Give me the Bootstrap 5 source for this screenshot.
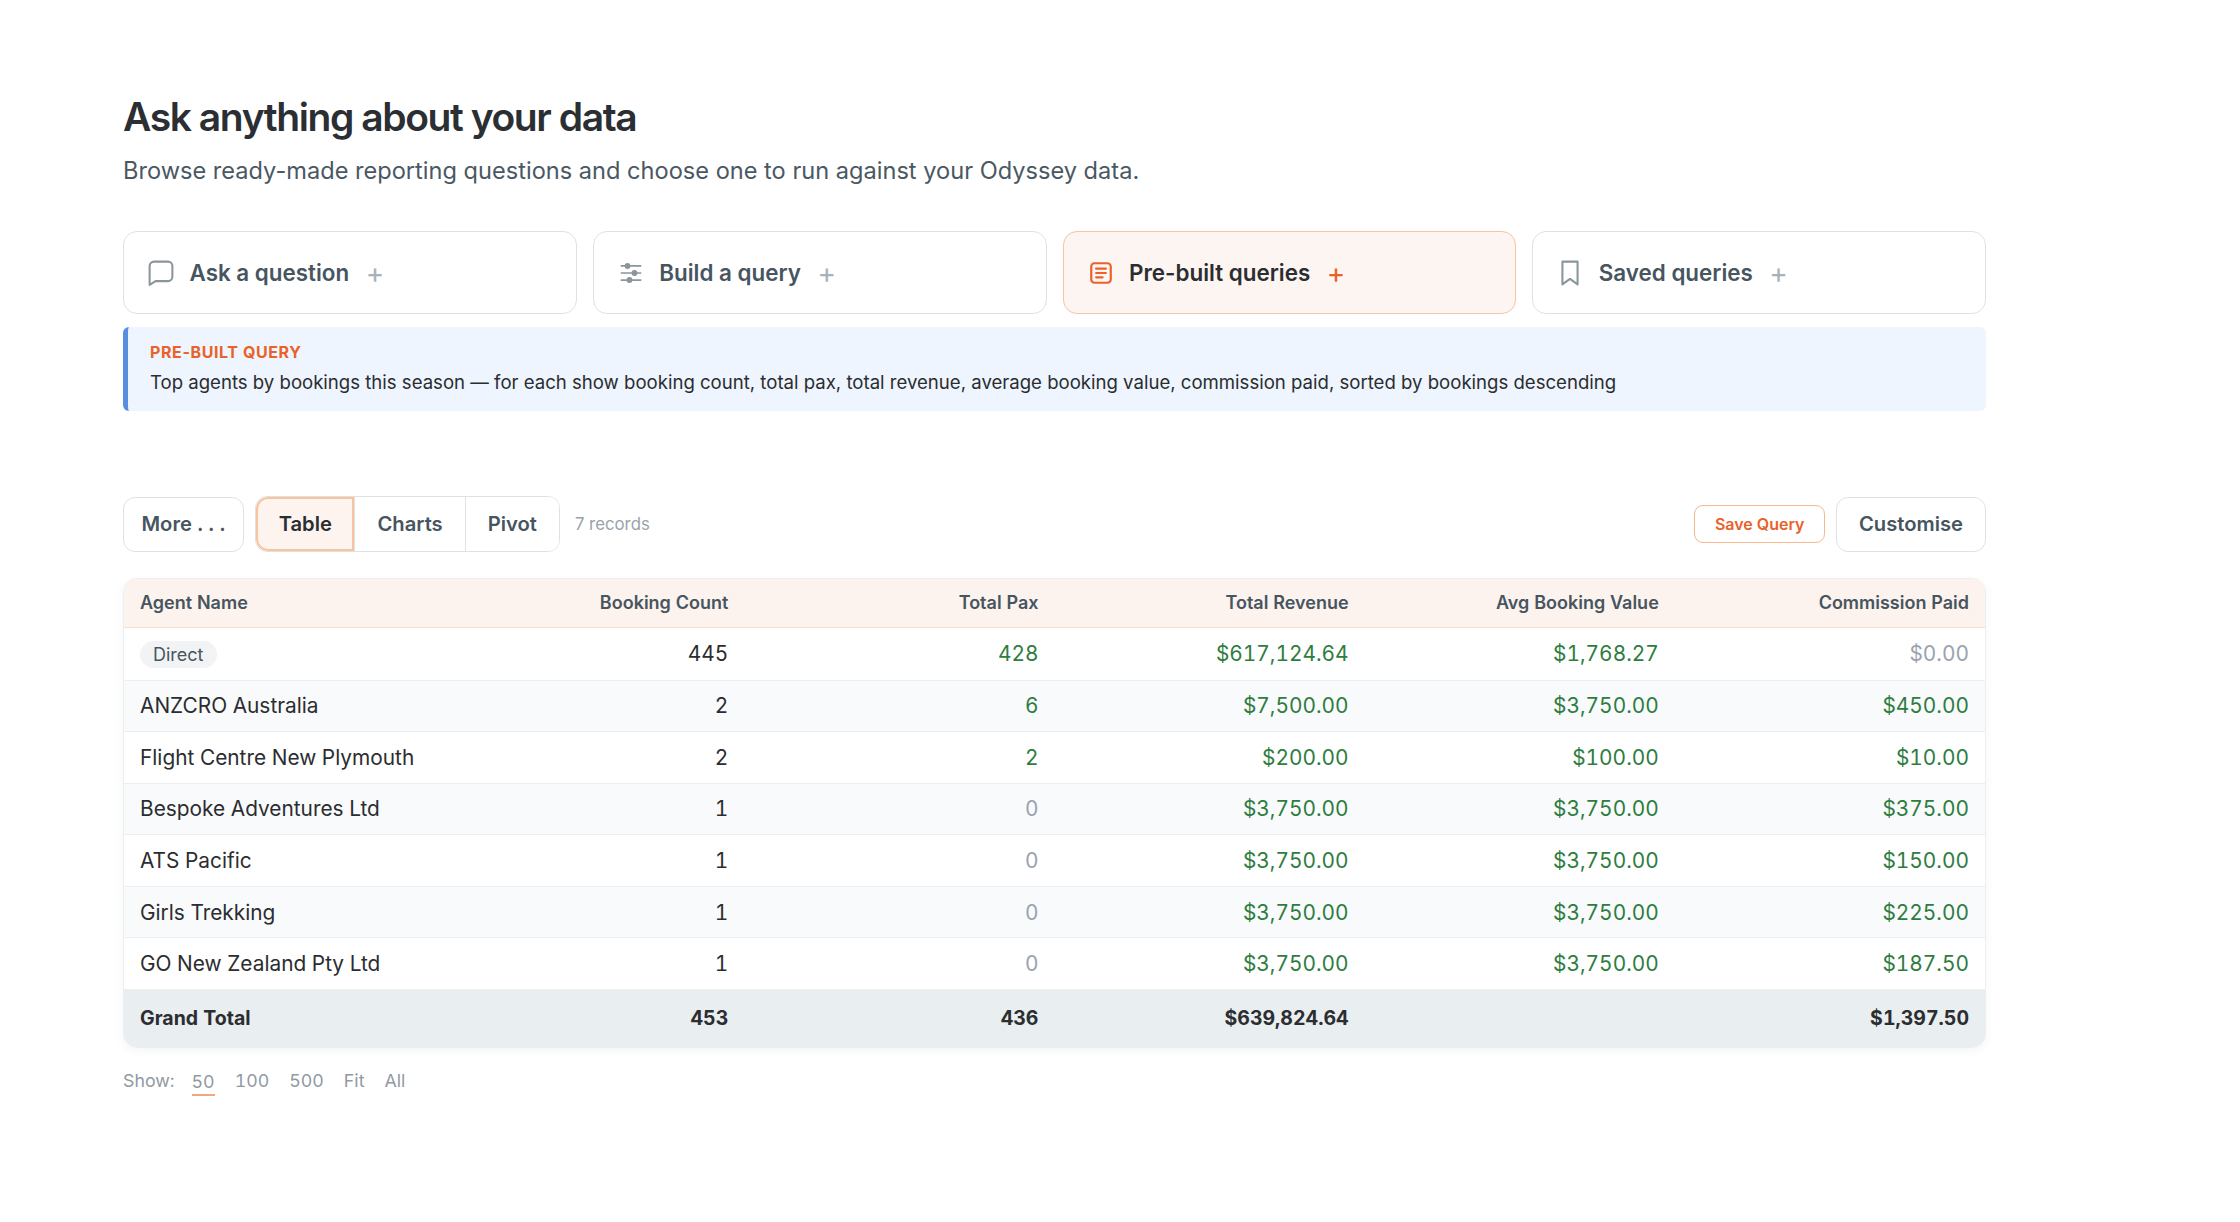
<!DOCTYPE html>
<html lang="en">
<head>
    <meta charset="UTF-8">
    <meta name="viewport" content="width=device-width, initial-scale=1.0">
    <title>Ask anything about your data</title>
    <link href="https://cdn.jsdelivr.net/npm/bootstrap@5.3.0/dist/css/bootstrap.min.css" rel="stylesheet">
    <style>
        body { font-family: "Inter", "Liberation Sans", sans-serif; background: #fff; color: #2b2d30; }
        .page-wrap { width: 1863px; margin-left: 123px; padding-top: 90px; }
        .page-title { font-size: 39px; line-height: 54px; font-weight: 600; letter-spacing: -1.42px; color: #2b2f33; margin: 0; }
        .page-sub { font-size: 23.6px; line-height: 34px; color: #4a5863; margin: 10px 0 0; }

        .mode-row { margin-top: 43px; gap: 16px; }
        .mode-tab { flex: 1 1 0; height: 83px; border: 1.5px solid #dfe2e4; border-radius: 14px; background: #fff; padding: 0 24px; gap: 15.5px; font-size: 22.4px; font-weight: 600; color: #47555f; }
        .mode-tab svg { width: 26px; height: 26px; flex: none; }
        .mode-tab .plus-sign { color: #a9b2b8; font-weight: 400; margin-left: 1px; font-size: 28px; line-height: 1; }
        .mode-tab.is-active { background: #fdf5f2; border-color: #f8c4a0; color: #2b2d30; }
        .mode-tab.is-active .plus-sign { color: #e8622a; }

        .query-note { margin-top: 13px; height: 84px; background: #eef5fe; border-left: 5px solid #5a8fe0; border-radius: 6px; padding: 14px 22px; }
        .query-label { font-size: 16px; line-height: 22px; font-weight: 700; color: #e8622a; letter-spacing: .6px; }
        .query-text { font-size: 18.59px; line-height: 28px; margin-top: 5px; color: #2b2d30; }

        .tool-row { margin-top: 85px; height: 56px; }
        .tool-btn { height: 55px; background: #fff; border: 1.5px solid #dfe2e4; border-radius: 12px; padding: 0 17.5px; font-size: 20.2px; font-weight: 600; color: #47555f; }
        .tool-btn-wide { padding: 0 22px; }
        .seg-group { height: 56px; border: 1.5px solid #dfe2e4; border-radius: 12px; margin-left: 11px; overflow: hidden; }
        .seg-item { background: #fff; border: 0; border-left: 1.5px solid #dfe2e4; padding: 0 22px; font-size: 20.2px; font-weight: 600; color: #47555f; }
        .seg-item:first-child { border-left: 0; }
        .seg-item.is-active { background: #fdf4f0; border: 2px solid #f8c4a0; border-radius: 12px 0 0 12px; padding: 0 20.5px; color: #2b2d30; }
        .records-count { margin-left: 15px; margin-top: 2px; font-size: 16.8px; color: #9aa3aa; }
        .save-btn { height: 38px; background: #fff; border: 1.5px solid #f8b68c; border-radius: 9px; padding: 0 19.5px; font-size: 16px; font-weight: 600; color: #e8622a; margin-right: 11px; }

        .table-box { margin-top: 26px; border: 1px solid #eceeef; border-radius: 14px; overflow: hidden; box-shadow: 0 3px 10px rgba(30, 50, 70, .05); }
        .data-table { table-layout: fixed; width: 100%; margin: 0; font-size: 20.85px; color: #2b2d30; font-variant-numeric: tabular-nums; }
        .data-table th, .data-table td { padding: 0 16px; vertical-align: middle; border-bottom: 1px solid #eceef0; background: transparent; box-shadow: none; color: inherit; }
        .data-table thead tr { height: 48px; background: #fcf2ee; }
        .data-table thead th { font-size: 18px; font-weight: 600; color: #47555f; border-bottom: 1px solid #f8dfcc; }
        .data-table tbody tr { height: 51.6px; background: #fff; }
        .data-table tbody tr:nth-child(even) { background: #f9fafc; }
        .data-table tbody tr:first-child { height: 53px; }
        .data-table tfoot tr { height: 57px; background: #e9eef0; }
        .data-table tfoot td { font-size: 19.5px; font-weight: 700; border-bottom: 0; }
        .data-table td.val-pos { color: #2e7d3f; }
        .data-table td.val-zero { color: #9aa3b0; }
        .direct-tag { display: inline-block; background: #f1f3f5; color: #47555f; font-size: 18px; line-height: 27px; padding: 0 13px; border-radius: 14px; }

        .show-row { margin-top: 18px; gap: 20px; font-size: 17.8px; line-height: 30px; color: #909aa2; font-variant-numeric: tabular-nums; }
        .show-row .show-label { margin-right: -3px; }
        .show-row .is-current { border-bottom: 2px solid #f4a77c; line-height: 24px; margin-top: 4px; }
    </style>
</head>
<body>
    <div class="page-wrap">
        <h1 class="page-title">Ask anything about your data</h1>
        <p class="page-sub">Browse ready-made reporting questions and choose one to run against your Odyssey data.</p>

        <div class="d-flex mode-row">
            <div class="mode-tab d-flex align-items-center">
                <svg viewBox="0 0 24 24" fill="none" stroke="#8a959c" stroke-width="1.9" stroke-linejoin="round"><path d="M1.5 23V5.5a4 4 0 0 1 4-4h13a4 4 0 0 1 4 4v10a4 4 0 0 1-4 4H7z"/></svg>
                <span>Ask a question</span><span class="plus-sign">+</span>
            </div>
            <div class="mode-tab d-flex align-items-center">
                <svg viewBox="0 0 24 24" fill="#8a959c" stroke="#8a959c" stroke-width="1.6"><path d="M2.5 5.5h19M2.5 12h19M2.5 18.5h19"/><circle cx="8.8" cy="5.5" r="1.9"/><circle cx="15.2" cy="12" r="1.9"/><circle cx="10.6" cy="18.5" r="1.9"/></svg>
                <span>Build a query</span><span class="plus-sign">+</span>
            </div>
            <div class="mode-tab is-active d-flex align-items-center">
                <svg viewBox="0 0 24 24" fill="none" stroke="#e8622a" stroke-width="2" stroke-linecap="round"><rect x="3" y="3" width="18" height="18" rx="3"/><path d="M7.5 8h9M7.5 12h9M7.5 16h6"/></svg>
                <span>Pre-built queries</span><span class="plus-sign">+</span>
            </div>
            <div class="mode-tab d-flex align-items-center">
                <svg viewBox="0 0 24 24" fill="none" stroke="#8a959c" stroke-width="1.9" stroke-linejoin="round"><path d="M5 1.5h14V22.5l-7-5-7 5z"/></svg>
                <span>Saved queries</span><span class="plus-sign">+</span>
            </div>
        </div>

        <div class="query-note">
            <div class="query-label">PRE-BUILT QUERY</div>
            <div class="query-text">Top agents by bookings this season — for each show booking count, total pax, total revenue, average booking value, commission paid, sorted by bookings descending</div>
        </div>

        <div class="tool-row d-flex align-items-center">
            <button class="tool-btn" type="button">More . . .</button>
            <div class="seg-group d-flex">
                <button class="seg-item is-active" type="button">Table</button>
                <button class="seg-item" type="button">Charts</button>
                <button class="seg-item" type="button">Pivot</button>
            </div>
            <span class="records-count">7 records</span>
            <button class="save-btn ms-auto" type="button">Save Query</button>
            <button class="tool-btn tool-btn-wide" type="button">Customise</button>
        </div>

        <div class="table-box">
            <table class="table data-table">
                <thead>
                    <tr>
                        <th>Agent Name</th>
                        <th class="text-end">Booking Count</th>
                        <th class="text-end">Total Pax</th>
                        <th class="text-end">Total Revenue</th>
                        <th class="text-end">Avg Booking Value</th>
                        <th class="text-end">Commission Paid</th>
                    </tr>
                </thead>
                <tbody>
                    <tr><td><span class="direct-tag">Direct</span></td><td class="text-end">445</td><td class="text-end val-pos">428</td><td class="text-end val-pos">$617,124.64</td><td class="text-end val-pos">$1,768.27</td><td class="text-end val-zero">$0.00</td></tr>
                    <tr><td>ANZCRO Australia</td><td class="text-end">2</td><td class="text-end val-pos">6</td><td class="text-end val-pos">$7,500.00</td><td class="text-end val-pos">$3,750.00</td><td class="text-end val-pos">$450.00</td></tr>
                    <tr><td>Flight Centre New Plymouth</td><td class="text-end">2</td><td class="text-end val-pos">2</td><td class="text-end val-pos">$200.00</td><td class="text-end val-pos">$100.00</td><td class="text-end val-pos">$10.00</td></tr>
                    <tr><td>Bespoke Adventures Ltd</td><td class="text-end">1</td><td class="text-end val-zero">0</td><td class="text-end val-pos">$3,750.00</td><td class="text-end val-pos">$3,750.00</td><td class="text-end val-pos">$375.00</td></tr>
                    <tr><td>ATS Pacific</td><td class="text-end">1</td><td class="text-end val-zero">0</td><td class="text-end val-pos">$3,750.00</td><td class="text-end val-pos">$3,750.00</td><td class="text-end val-pos">$150.00</td></tr>
                    <tr><td>Girls Trekking</td><td class="text-end">1</td><td class="text-end val-zero">0</td><td class="text-end val-pos">$3,750.00</td><td class="text-end val-pos">$3,750.00</td><td class="text-end val-pos">$225.00</td></tr>
                    <tr><td>GO New Zealand Pty Ltd</td><td class="text-end">1</td><td class="text-end val-zero">0</td><td class="text-end val-pos">$3,750.00</td><td class="text-end val-pos">$3,750.00</td><td class="text-end val-pos">$187.50</td></tr>
                </tbody>
                <tfoot>
                    <tr><td>Grand Total</td><td class="text-end">453</td><td class="text-end">436</td><td class="text-end">$639,824.64</td><td></td><td class="text-end">$1,397.50</td></tr>
                </tfoot>
            </table>
        </div>

        <div class="show-row d-flex align-items-start">
            <span class="show-label">Show:</span>
            <span class="is-current">50</span>
            <span>100</span>
            <span>500</span>
            <span>Fit</span>
            <span>All</span>
        </div>
    </div>
    <script src="https://cdn.jsdelivr.net/npm/bootstrap@5.3.0/dist/js/bootstrap.bundle.min.js"></script>
</body>
</html>
